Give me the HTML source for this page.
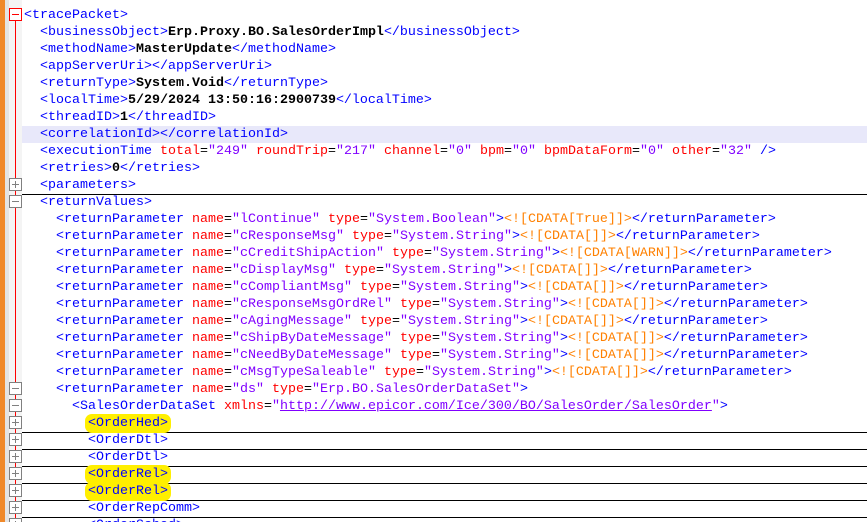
<!DOCTYPE html>
<html><head><meta charset="utf-8"><style>
html,body{margin:0;width:867px;height:522px;overflow:hidden}
body{background:#fff;position:relative;font-family:"Liberation Mono",monospace;font-size:13.33px}
#ob{position:absolute;left:0;top:0;width:5px;height:522px;background:#f0892a}
#gs{position:absolute;left:5px;top:0;width:4px;height:522px;background:#e4e4e4}
#gut{position:absolute;left:9px;top:0;width:13px;height:522px;background:#f4f4f4}
#rl{position:absolute;left:15px;top:20px;width:1px;height:502px;background:#f00}
.fb{position:absolute;left:9px;width:11px;height:11px;border:1px solid #808080;background:#fff}
.fb.r{border-color:#f00}
.fb:before{content:"";position:absolute;left:2px;top:5px;width:7px;height:1px;background:#808080}
.fb.p:after{content:"";position:absolute;left:5px;top:2px;width:1px;height:7px;background:#808080}
.fb.r:before{background:#f00}
.ln{position:absolute;left:24px;right:0;height:17px;line-height:17px;white-space:pre;color:#000}
.t{color:#0000ff}.a{color:#ff0000}.v{color:#8000ff}.x{font-weight:bold}.c{color:#ff8000}
.u{border-bottom:1px solid #000;left:22px;padding-left:2px}
.hl{background:#ffef00;border-radius:7px;padding:2px 3px;margin:-2px -3px}
</style></head><body>
<div id="ob"></div><div id="gs"></div><div id="gut"></div><div id="rl"></div>
<div style="position:absolute;left:22px;right:0;top:126px;height:17px;background:#e8e8fa"></div>
<div class="ln" style="top:7px"><span class="t">&lt;tracePacket&gt;</span></div>
<div class="ln" style="top:24px">  <span class="t">&lt;businessObject&gt;</span><span class="x">Erp.Proxy.BO.SalesOrderImpl</span><span class="t">&lt;/businessObject&gt;</span></div>
<div class="ln" style="top:41px">  <span class="t">&lt;methodName&gt;</span><span class="x">MasterUpdate</span><span class="t">&lt;/methodName&gt;</span></div>
<div class="ln" style="top:58px">  <span class="t">&lt;appServerUri&gt;&lt;/appServerUri&gt;</span></div>
<div class="ln" style="top:75px">  <span class="t">&lt;returnType&gt;</span><span class="x">System.Void</span><span class="t">&lt;/returnType&gt;</span></div>
<div class="ln" style="top:92px">  <span class="t">&lt;localTime&gt;</span><span class="x">5/29/2024 13:50:16:2900739</span><span class="t">&lt;/localTime&gt;</span></div>
<div class="ln" style="top:109px">  <span class="t">&lt;threadID&gt;</span><span class="x">1</span><span class="t">&lt;/threadID&gt;</span></div>
<div class="ln" style="top:126px">  <span class="t">&lt;correlationId&gt;&lt;/correlationId&gt;</span></div>
<div class="ln" style="top:143px">  <span class="t">&lt;executionTime </span><span class="a">total</span>=<span class="v">"249"</span> <span class="a">roundTrip</span>=<span class="v">"217"</span> <span class="a">channel</span>=<span class="v">"0"</span> <span class="a">bpm</span>=<span class="v">"0"</span> <span class="a">bpmDataForm</span>=<span class="v">"0"</span> <span class="a">other</span>=<span class="v">"32"</span> <span class="t">/&gt;</span></div>
<div class="ln" style="top:160px">  <span class="t">&lt;retries&gt;</span><span class="x">0</span><span class="t">&lt;/retries&gt;</span></div>
<div class="ln u" style="top:177px">  <span class="t">&lt;parameters&gt;</span></div>
<div class="ln" style="top:194px">  <span class="t">&lt;returnValues&gt;</span></div>
<div class="ln" style="top:211px">    <span class="t">&lt;returnParameter </span><span class="a">name</span>=<span class="v">"lContinue"</span> <span class="a">type</span>=<span class="v">"System.Boolean"</span><span class="t">&gt;</span><span class="c">&lt;![CDATA[True]]&gt;</span><span class="t">&lt;/returnParameter&gt;</span></div>
<div class="ln" style="top:228px">    <span class="t">&lt;returnParameter </span><span class="a">name</span>=<span class="v">"cResponseMsg"</span> <span class="a">type</span>=<span class="v">"System.String"</span><span class="t">&gt;</span><span class="c">&lt;![CDATA[]]&gt;</span><span class="t">&lt;/returnParameter&gt;</span></div>
<div class="ln" style="top:245px">    <span class="t">&lt;returnParameter </span><span class="a">name</span>=<span class="v">"cCreditShipAction"</span> <span class="a">type</span>=<span class="v">"System.String"</span><span class="t">&gt;</span><span class="c">&lt;![CDATA[WARN]]&gt;</span><span class="t">&lt;/returnParameter&gt;</span></div>
<div class="ln" style="top:262px">    <span class="t">&lt;returnParameter </span><span class="a">name</span>=<span class="v">"cDisplayMsg"</span> <span class="a">type</span>=<span class="v">"System.String"</span><span class="t">&gt;</span><span class="c">&lt;![CDATA[]]&gt;</span><span class="t">&lt;/returnParameter&gt;</span></div>
<div class="ln" style="top:279px">    <span class="t">&lt;returnParameter </span><span class="a">name</span>=<span class="v">"cCompliantMsg"</span> <span class="a">type</span>=<span class="v">"System.String"</span><span class="t">&gt;</span><span class="c">&lt;![CDATA[]]&gt;</span><span class="t">&lt;/returnParameter&gt;</span></div>
<div class="ln" style="top:296px">    <span class="t">&lt;returnParameter </span><span class="a">name</span>=<span class="v">"cResponseMsgOrdRel"</span> <span class="a">type</span>=<span class="v">"System.String"</span><span class="t">&gt;</span><span class="c">&lt;![CDATA[]]&gt;</span><span class="t">&lt;/returnParameter&gt;</span></div>
<div class="ln" style="top:313px">    <span class="t">&lt;returnParameter </span><span class="a">name</span>=<span class="v">"cAgingMessage"</span> <span class="a">type</span>=<span class="v">"System.String"</span><span class="t">&gt;</span><span class="c">&lt;![CDATA[]]&gt;</span><span class="t">&lt;/returnParameter&gt;</span></div>
<div class="ln" style="top:330px">    <span class="t">&lt;returnParameter </span><span class="a">name</span>=<span class="v">"cShipByDateMessage"</span> <span class="a">type</span>=<span class="v">"System.String"</span><span class="t">&gt;</span><span class="c">&lt;![CDATA[]]&gt;</span><span class="t">&lt;/returnParameter&gt;</span></div>
<div class="ln" style="top:347px">    <span class="t">&lt;returnParameter </span><span class="a">name</span>=<span class="v">"cNeedByDateMessage"</span> <span class="a">type</span>=<span class="v">"System.String"</span><span class="t">&gt;</span><span class="c">&lt;![CDATA[]]&gt;</span><span class="t">&lt;/returnParameter&gt;</span></div>
<div class="ln" style="top:364px">    <span class="t">&lt;returnParameter </span><span class="a">name</span>=<span class="v">"cMsgTypeSaleable"</span> <span class="a">type</span>=<span class="v">"System.String"</span><span class="t">&gt;</span><span class="c">&lt;![CDATA[]]&gt;</span><span class="t">&lt;/returnParameter&gt;</span></div>
<div class="ln" style="top:381px">    <span class="t">&lt;returnParameter </span><span class="a">name</span>=<span class="v">"ds"</span> <span class="a">type</span>=<span class="v">"Erp.BO.SalesOrderDataSet"</span><span class="t">&gt;</span></div>
<div class="ln" style="top:398px">      <span class="t">&lt;SalesOrderDataSet </span><span class="a">xmlns</span>=<span class="v">"<u>http://www.epicor.com/Ice/300/BO/SalesOrder/SalesOrder</u>"</span><span class="t">&gt;</span></div>
<div class="ln u" style="top:415px">        <span class="t hl">&lt;OrderHed&gt;</span></div>
<div class="ln u" style="top:432px">        <span class="t">&lt;OrderDtl&gt;</span></div>
<div class="ln u" style="top:449px">        <span class="t">&lt;OrderDtl&gt;</span></div>
<div class="ln u" style="top:466px">        <span class="t hl">&lt;OrderRel&gt;</span></div>
<div class="ln u" style="top:483px">        <span class="t hl">&lt;OrderRel&gt;</span></div>
<div class="ln u" style="top:500px">        <span class="t">&lt;OrderRepComm&gt;</span></div>
<div class="ln" style="top:517px">        <span class="t">&lt;OrderSched&gt;</span></div>
<div class="fb r" style="top:8px"></div>
<div class="fb p" style="top:178px"></div>
<div class="fb" style="top:195px"></div>
<div class="fb" style="top:382px"></div>
<div class="fb" style="top:399px"></div>
<div class="fb p" style="top:416px"></div>
<div class="fb p" style="top:433px"></div>
<div class="fb p" style="top:450px"></div>
<div class="fb p" style="top:467px"></div>
<div class="fb p" style="top:484px"></div>
<div class="fb p" style="top:501px"></div>
<div class="fb p" style="top:518px"></div>
</body></html>
